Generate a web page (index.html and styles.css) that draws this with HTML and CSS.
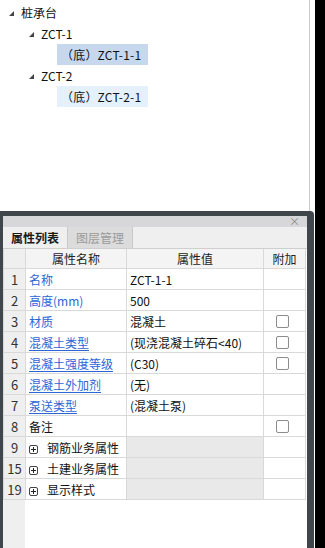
FILE: index.html
```html
<!DOCTYPE html>
<html lang="zh-CN">
<head>
    <meta charset="UTF-8">
    <meta name="viewport" content="width=device-width, initial-scale=1.0">
    <title>属性列表</title>
    <link rel="stylesheet" href="styles.css">
</head>
<body>

    <div class="app">
        <!-- Component tree -->
        <div class="tree">
            <div class="node level-0"><span class="arrow"></span>桩承台</div>
            <div class="node level-1"><span class="arrow"></span>ZCT-1</div>
            <div class="node level-2 selected">（底）ZCT-1-1</div>
            <div class="node level-1"><span class="arrow"></span>ZCT-2</div>
            <div class="node level-2 hover">（底）ZCT-2-1</div>
        </div>

        <!-- Property panel -->
        <div class="panel">
            <div class="titlebar"><span class="close">×</span></div>
            <div class="tabs">
                <div class="tab active">属性列表</div>
                <div class="tab">图层管理</div>
            </div>

            <div class="grid">
                <table class="props">
                    <colgroup>
                        <col class="c-num">
                        <col class="c-name">
                        <col class="c-value">
                        <col class="c-add">
                    </colgroup>
                    <thead>
                        <tr>
                            <th></th>
                            <th>属性名称</th>
                            <th>属性值</th>
                            <th>附加</th>
                        </tr>
                    </thead>
                    <tbody>
                        <tr>
                            <td class="num">1</td>
                            <td class="name link">名称</td>
                            <td>ZCT-1-1</td>
                            <td></td>
                        </tr>
                        <tr>
                            <td class="num">2</td>
                            <td class="name link">高度(mm)</td>
                            <td>500</td>
                            <td></td>
                        </tr>
                        <tr>
                            <td class="num">3</td>
                            <td class="name link">材质</td>
                            <td>混凝土</td>
                            <td class="add"><span class="check"></span></td>
                        </tr>
                        <tr>
                            <td class="num">4</td>
                            <td class="name link under">混凝土类型</td>
                            <td>(现浇混凝土碎石&lt;40)</td>
                            <td class="add"><span class="check"></span></td>
                        </tr>
                        <tr>
                            <td class="num">5</td>
                            <td class="name link under">混凝土强度等级</td>
                            <td>(C30)</td>
                            <td class="add"><span class="check"></span></td>
                        </tr>
                        <tr>
                            <td class="num">6</td>
                            <td class="name link under">混凝土外加剂</td>
                            <td>(无)</td>
                            <td></td>
                        </tr>
                        <tr>
                            <td class="num">7</td>
                            <td class="name link under">泵送类型</td>
                            <td>(混凝土泵)</td>
                            <td></td>
                        </tr>
                        <tr>
                            <td class="num">8</td>
                            <td class="name">备注</td>
                            <td></td>
                            <td class="add"><span class="check"></span></td>
                        </tr>
                        <tr class="group">
                            <td class="num">9</td>
                            <td class="name"><span class="plus"></span>钢筋业务属性</td>
                            <td class="blank"></td>
                            <td></td>
                        </tr>
                        <tr class="group">
                            <td class="num">15</td>
                            <td class="name"><span class="plus"></span>土建业务属性</td>
                            <td class="blank"></td>
                            <td></td>
                        </tr>
                        <tr class="group">
                            <td class="num">19</td>
                            <td class="name"><span class="plus"></span>显示样式</td>
                            <td class="blank"></td>
                            <td></td>
                        </tr>
                    </tbody>
                </table>
            </div>
        </div>
    </div>

</body>
</html>
```

FILE: styles.css
```css
body {
    margin: 0;
    padding: 0;
    background-color: #000;
    font-family: 'Noto Sans CJK SC', 'Noto Sans', sans-serif;
    font-size: 12px;
    color: #111;
}

.app {
    width: 315px;
    height: 548px;
    overflow: hidden;
    background-color: #fff;
}

/* tree */

.tree {
    width: 310px;
    height: 211px;
    box-sizing: border-box;
    border-right: 1px solid #c9c9ce;
    padding-top: 2px;
}

.node {
    height: 21px;
    line-height: 21px;
    white-space: nowrap;
    display: flex;
    align-items: center;
}

.level-0 {
    padding-left: 9px;
}

.level-1 {
    padding-left: 29px;
}

.level-2 {
    margin-left: 57px;
    width: 91px;
    padding-left: 4px;
    box-sizing: border-box;
    letter-spacing: 0.2px;
}

.node.selected {
    background-color: #c7d8ee;
}

.node.hover {
    background-color: #e4f0fc;
}

.arrow {
    width: 0;
    height: 0;
    border-left: 5px solid transparent;
    border-bottom: 5px solid #444;
    margin-right: 7px;
    margin-top: 1px;
}

/* panel */

.panel {
    width: 314px;
    height: 337px;
    box-sizing: border-box;
    background-color: #41464d;
    padding: 5px 7px 0 3px;
    border-top-right-radius: 4px;
    display: flex;
    flex-direction: column;
}

.titlebar {
    height: 11px;
    background-color: #d7d7d9;
    display: flex;
    justify-content: flex-end;
    align-items: center;
    padding-right: 7px;
}

.close {
    color: #8a8a8a;
    font-size: 11px;
    line-height: 11px;
}

.tabs {
    height: 21px;
    background-color: #efefef;
    border-bottom: 1px solid #cfcfcf;
    display: flex;
}

.tab {
    width: 65px;
    box-sizing: border-box;
    text-align: center;
    line-height: 22px;
    color: #9a9a9a;
    background-color: #dcdcdc;
    border-right: 1px solid #c9c9c9;
}

.tab.active {
    color: #1a1a1a;
    background-color: #efefef;
    font-weight: bold;
}

.grid {
    flex: 1;
    background: linear-gradient(to right, #efefef 22px, #fff 22px);
}

/* property table */

.props {
    width: 302px;
    table-layout: fixed;
    border-collapse: collapse;
}

.c-num {
    width: 22px;
}

.c-name {
    width: 101px;
}

.c-value {
    width: 137px;
}

.c-add {
    width: 42px;
}

.props th,
.props td {
    height: 20px;
    padding: 0;
    border: 1px solid #d9d9d9;
    white-space: nowrap;
    overflow: hidden;
}

.props th {
    height: 19px;
    font-weight: normal;
    color: #222;
    background-color: #f4f4f4;
    text-align: center;
    border-top: none;
}

.props th:first-child {
    background-color: #efefef;
}

.props td {
    padding-left: 3px;
    background-color: #fff;
}

.props td.num {
    padding: 0;
    text-align: center;
    color: #333;
    background-color: #efefef;
    font-size: 13px;
}

.props td.link {
    color: #2c66d8;
}

.props td.under {
    text-decoration: underline;
    text-underline-offset: 2px;
}

.props td.blank {
    background-color: #e9e9e9;
}

.props td.add {
    padding: 0 0 0 12px;
}

.check {
    display: block;
    width: 11px;
    height: 11px;
    border: 1px solid #8c8c8c;
    border-radius: 2px;
}

.plus {
    display: inline-block;
    position: relative;
    width: 7px;
    height: 7px;
    border: 1px solid #444;
    border-radius: 2px;
    margin-right: 9px;
    vertical-align: -1px;
}

.plus::before,
.plus::after {
    content: "";
    position: absolute;
    background-color: #222;
}

.plus::before {
    left: 1px;
    top: 3px;
    width: 5px;
    height: 1px;
}

.plus::after {
    left: 3px;
    top: 1px;
    width: 1px;
    height: 5px;
}
```
